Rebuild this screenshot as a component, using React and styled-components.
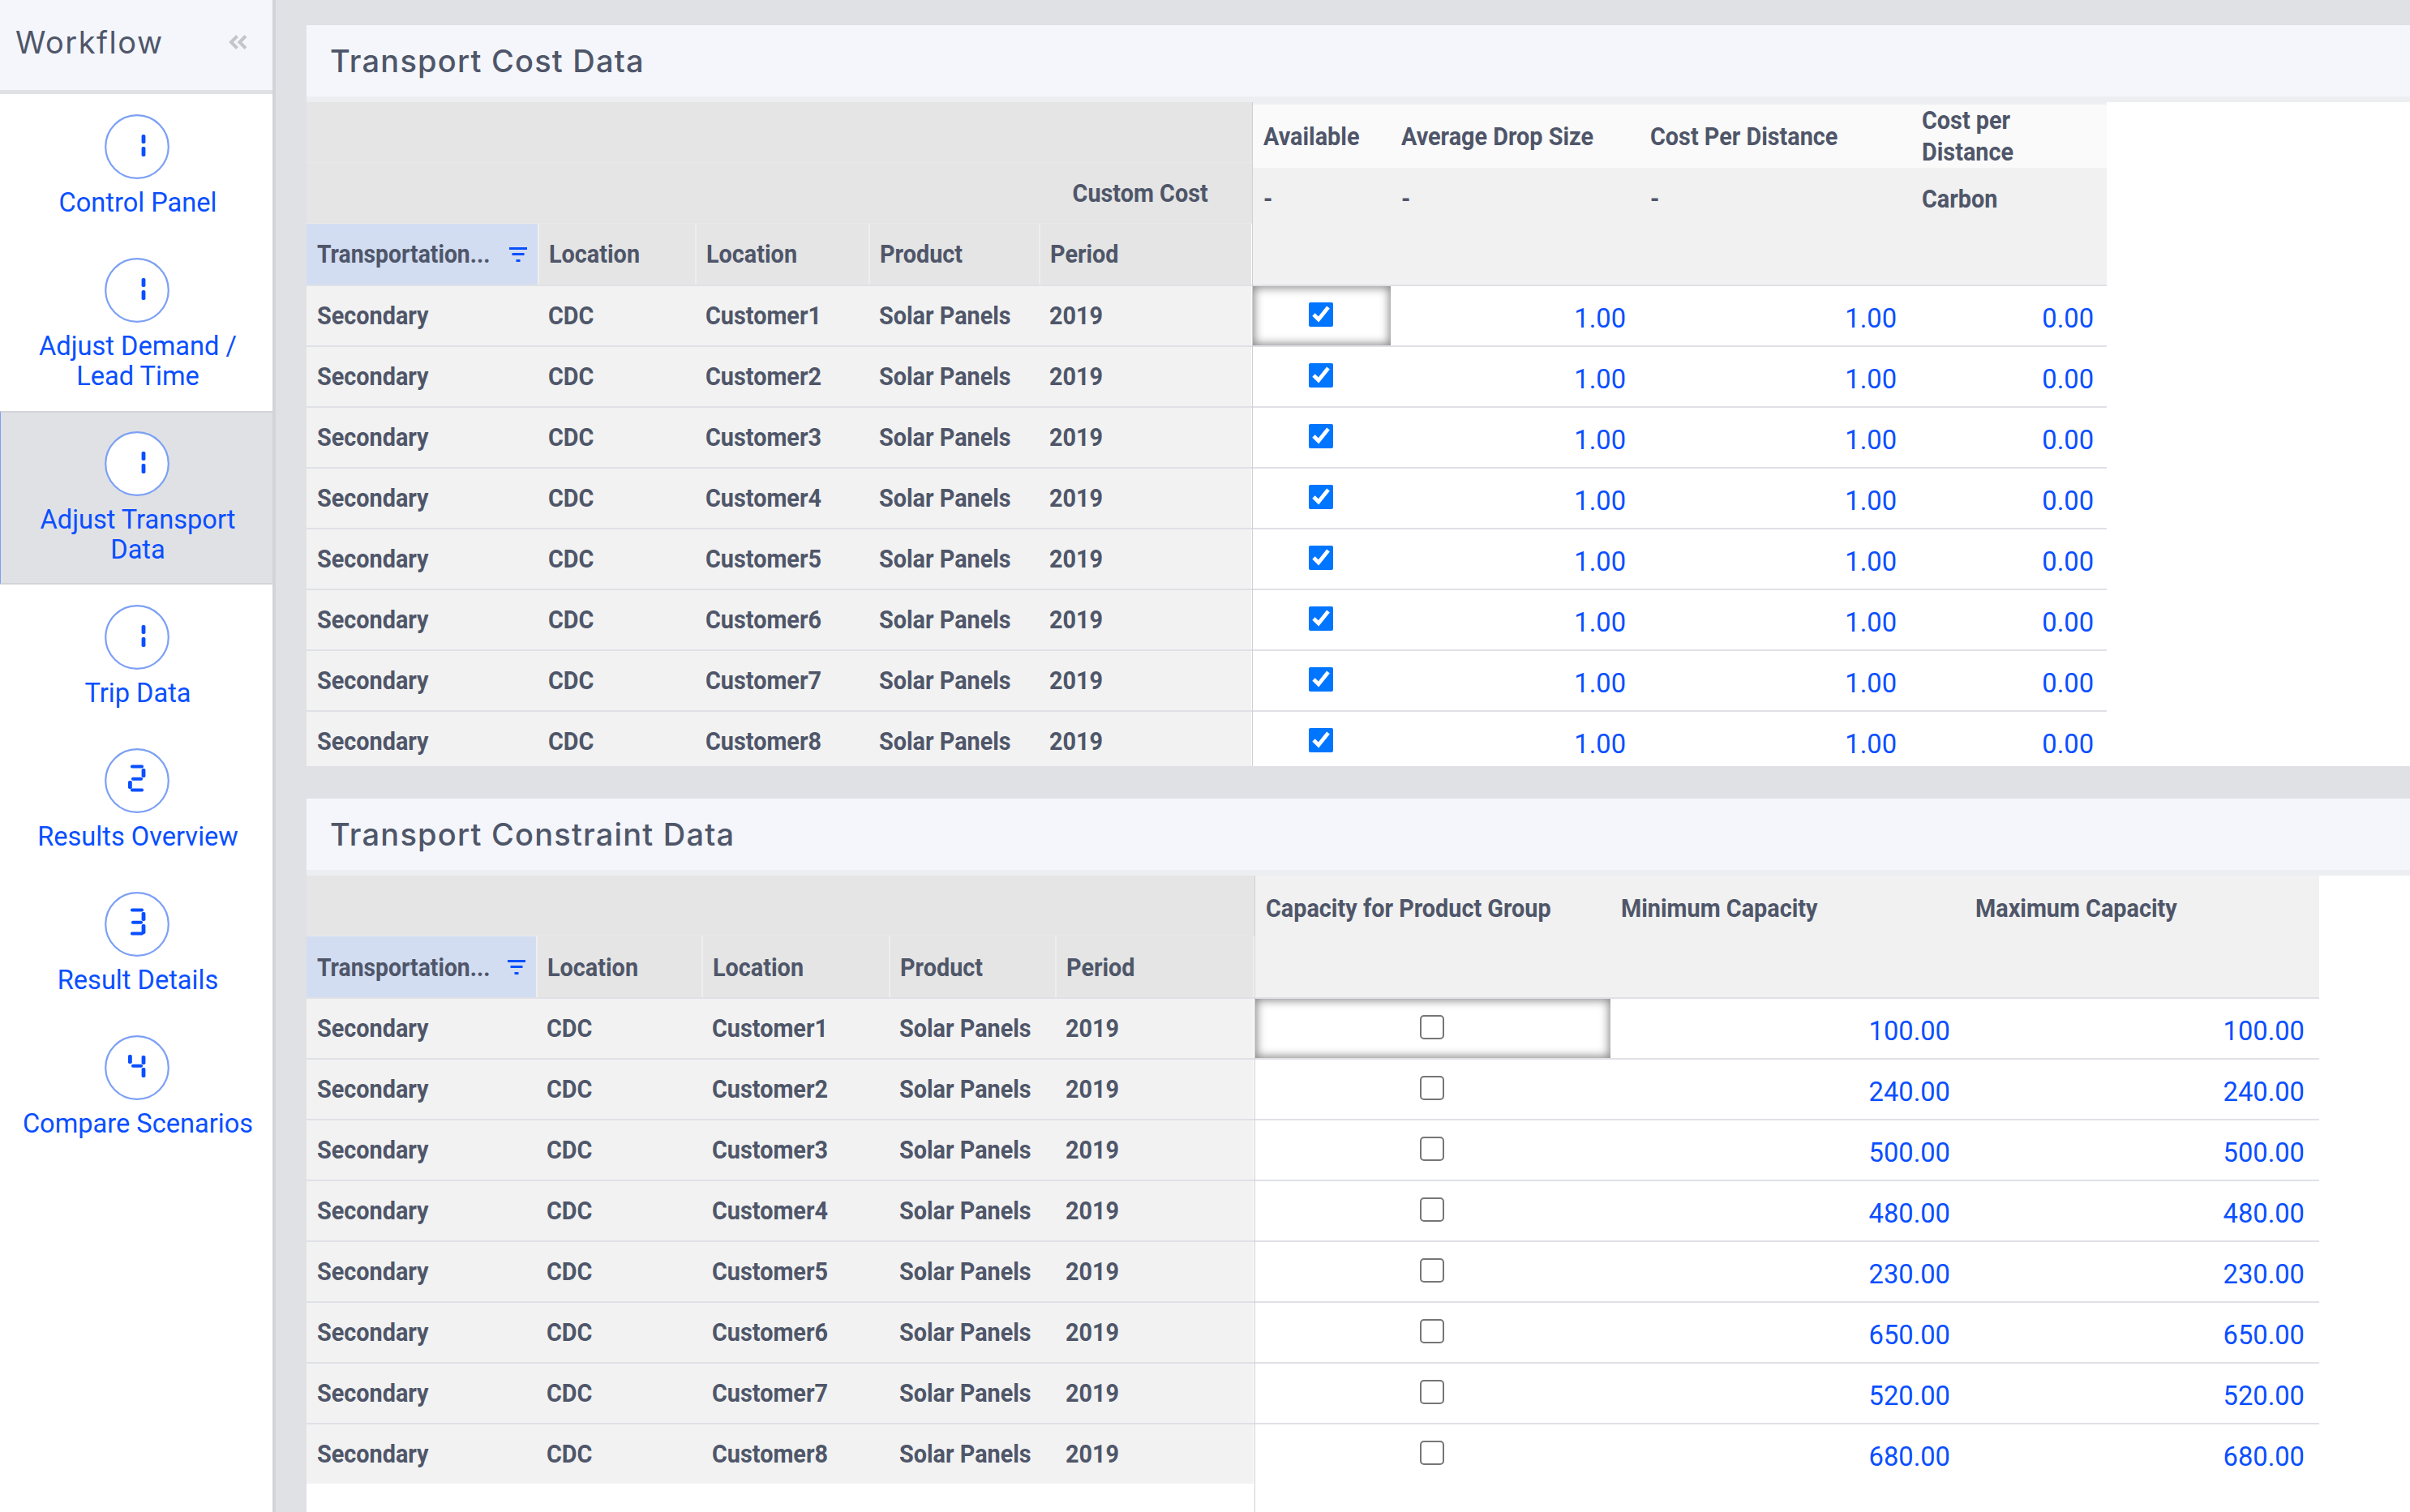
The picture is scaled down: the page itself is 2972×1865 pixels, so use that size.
import React from 'react';
import styled, { createGlobalStyle } from 'styled-components';

const GlobalStyle = createGlobalStyle`
  html, body {
    margin: 0;
    padding: 0;
    background: #fff;
  }
  * {
    box-sizing: border-box;
  }
`;

const Page = styled.div`
  display: flex;
  width: 2972px;
  height: 1865px;
  overflow: hidden;
  font-family: Roboto, "Liberation Sans", sans-serif;
`;

const Sidebar = styled.aside`
  flex: 0 0 340px;
  display: flex;
  flex-direction: column;
  background: #fff;
  border-right: 4px solid #d3d4d9;
`;

const SideHeader = styled.div`
  height: 116px;
  padding: 0 31px 7px 19px;
  display: flex;
  align-items: center;
  justify-content: space-between;
  background: #f4f6fb;
  border-bottom: 5px solid #e0e1e5;
`;

const SideTitle = styled.div`
  font-family: Inter, "Open Sans", sans-serif;
  font-size: 38px;
  font-weight: 400;
  letter-spacing: 1.5px;
  color: #4f5669;
`;

const NavItem = styled.div`
  height: ${(p) => p.$height}px;
  padding-top: ${(p) => (p.$active ? 23 : p.$late ? 26 : 25)}px;
  display: flex;
  flex-direction: column;
  align-items: center;
  background: ${(p) => (p.$active ? '#e0e1e5' : '#fff')};
  border-left: 1px solid ${(p) => (p.$active ? '#7ca0f5' : 'transparent')};
  border-top: ${(p) => (p.$active ? '2px solid #d3d4d9' : '0')};
  border-bottom: 2px solid ${(p) => (p.$active ? '#d3d4d9' : '#fff')};
`;

const NavLabel = styled.div`
  margin: 11px 0 0 3px;
  width: 296px;
  font-size: 32.6px;
  line-height: 37px;
  color: #0a4fff;
  text-align: center;
`;

const Main = styled.main`
  flex: 1;
  display: flex;
  flex-direction: column;
  gap: 40px;
  padding: 31px 0 0 38px;
  background: #e0e1e5;
`;

const Section = styled.section`
  height: ${(p) => (p.$height ? `${p.$height}px` : 'auto')};
  flex: ${(p) => (p.$height ? '0 0 auto' : 1)};
  display: flex;
  flex-direction: column;
  overflow: hidden;
  background: #fff;
`;

const SectionTitle = styled.h2`
  flex: 0 0 95px;
  margin: 0;
  padding: 0 0 1px 29px;
  display: flex;
  align-items: center;
  font-family: Inter, "Open Sans", sans-serif;
  font-size: 38px;
  font-weight: 500;
  letter-spacing: 1.2px;
  color: #4f5669;
  background: #f4f6fb;
  border-bottom: 7px solid #edeef2;
`;

const TableWrap = styled.div`
  flex: 1;
  display: flex;
  align-items: stretch;
`;

const FrozenPane = styled.div`
  flex: 0 0 ${(p) => p.$width}px;
  border-right: 1px solid #cfcfcf;
`;

const ScrollPane = styled.div`
  flex: 0 0 ${(p) => p.$width}px;
`;

const GridRow = styled.div`
  display: grid;
  grid-template-columns: ${(p) => p.$cols};
  height: ${(p) => p.$height || 75}px;
  background: ${(p) => p.$bg || 'transparent'};
  border-bottom: ${(p) => p.$line || '2px solid #e0e1e6'};
  border-top: ${(p) => p.$top || '0'};
`;

const HeadBand = styled.div`
  height: ${(p) => p.$height}px;
  padding-right: 54px;
  display: flex;
  align-items: center;
  justify-content: flex-end;
  background: #e5e5e5;
  border-bottom: ${(p) => p.$line || '1px solid #e9e9ea'};
`;

const HeadCell = styled.div`
  display: flex;
  align-items: center;
  justify-content: space-between;
  padding: 0 13px 0 ${(p) => (p.$first ? 13 : 12)}px;
  background: ${(p) => (p.$filtered ? '#d2ddf2' : '#e5e5e5')};
  border-left: ${(p) => (p.$first ? '0' : '2px solid #eeeeee')};
`;

const BoldText = styled.span`
  display: inline-block;
  min-width: 0;
  font-size: 32px;
  font-weight: 700;
  line-height: 39px;
  color: #4f5669;
  white-space: nowrap;
  transform: scaleX(${(p) => p.$squeeze || 0.9});
  transform-origin: ${(p) => (p.$right ? 'right' : 'left')} center;
  margin-top: ${(p) => p.$drop || 0}px;
`;

const ColHead = styled.div`
  padding-left: ${(p) => p.$pad || 13}px;
  display: flex;
  align-items: ${(p) => (p.$top ? 'flex-start' : 'center')};
  padding-top: ${(p) => (p.$top ? `${p.$top}px` : 0)};
`;

const FrozenCell = styled.div`
  padding-left: 13px;
  display: flex;
  align-items: center;
  background: #f2f2f2;
`;

const CheckCell = styled.div`
  display: flex;
  align-items: center;
  justify-content: center;
  padding: 0 2px 3px 0;
  background: #fff;
  box-shadow: ${(p) => (p.$selected ? 'inset 0 0 12px 2px #888' : 'none')};
`;

const Check = styled.input`
  width: 30px;
  height: 30px;
  margin: 0;
  accent-color: #0075ff;

  &:not(:checked) {
    appearance: none;
    background: #fff;
    border: 2px solid #767676;
    border-radius: 5px;
  }
`;

const NumCell = styled.div`
  padding: 7px ${(p) => p.$pad}px 0 0;
  display: flex;
  align-items: center;
  justify-content: flex-end;
  font-size: 32.7px;
  color: #0a4fff;
  background: #fff;
`;

const digitSegments = {
  1: ['b', 'c'],
  2: ['a', 'b', 'g', 'e', 'd'],
  3: ['a', 'b', 'g', 'c', 'd'],
  4: ['f', 'g', 'b', 'c'],
};

const segmentRects = {
  a: { x: 32, y: 20.5, width: 16, height: 4 },
  b: { x: 45.6, y: 25, width: 4.8, height: 11 },
  c: { x: 45.6, y: 40, width: 4.8, height: 12 },
  d: { x: 32, y: 49.5, width: 16, height: 4 },
  e: { x: 29, y: 40, width: 4.8, height: 10 },
  f: { x: 29, y: 24, width: 4.8, height: 11 },
  g: { x: 33, y: 35.8, width: 14, height: 4 },
};

function StepBadge({ digit }) {
  return (
    <svg width="80" height="80" viewBox="0 0 80 80" style={{ flex: 'none' }}>
      <circle cx="40" cy="40" r="38.8" fill="#fff" stroke="#7ca0f5" strokeWidth="2.2" />
      {digitSegments[digit].map((s) => (
        <rect key={s} {...segmentRects[s]} rx="1.8" fill="#0a4fff" />
      ))}
    </svg>
  );
}

function FilterIcon() {
  return (
    <svg width="22" height="18" viewBox="0 0 22 18" style={{ flex: 'none' }}>
      <rect x="0" y="0" width="22" height="3" fill="#0a4fff" />
      <rect x="3.5" y="7" width="15" height="3" fill="#0a4fff" />
      <rect x="8.5" y="15" width="5" height="3" fill="#0a4fff" />
    </svg>
  );
}

function CollapseIcon() {
  return (
    <svg width="23" height="18" viewBox="0 0 23 18" fill="none" stroke="#c3c5cb" strokeWidth="4">
      <path d="M10.5 1.5 3 9l7.5 7.5" />
      <path d="M21 1.5 13.5 9l7.5 7.5" />
    </svg>
  );
}

const navItems = [
  { label: 'Control Panel', digit: 1, height: 177 },
  { label: 'Adjust Demand / Lead Time', digit: 1, height: 214 },
  { label: 'Adjust Transport Data', digit: 1, height: 214, active: true },
  { label: 'Trip Data', digit: 1, height: 176 },
  { label: 'Results Overview', digit: 2, height: 177, late: true },
  { label: 'Result Details', digit: 3, height: 177, late: true },
  { label: 'Compare Scenarios', digit: 4, height: 177, late: true },
];

const customers = [1, 2, 3, 4, 5, 6, 7, 8];

const costFrozen = '285px 194px 214px 210px 262px';
const costCols = '170px 306px 334px 243px';
const costNums = ['1.00', '1.00', '0.00'];

const constraintFrozen = '283px 204px 231px 205px 245px';
const constraintCols = '438px 437px 437px';
const constraintNums = ['100.00', '240.00', '500.00', '480.00', '230.00', '650.00', '520.00', '680.00'];

function FrozenHead({ cols, labels, drop }) {
  return (
    <GridRow $cols={cols} $height={77}>
      <HeadCell $filtered $first>
        <BoldText $squeeze={0.885} $drop={drop}>Transportation...</BoldText>
        <FilterIcon />
      </HeadCell>
      {labels.map((l, i) => (
        <HeadCell key={i}>
          <BoldText $drop={drop}>{l}</BoldText>
        </HeadCell>
      ))}
    </GridRow>
  );
}

function FrozenRow({ cols, n, last }) {
  return (
    <GridRow $cols={cols} $height={last ? 73 : 75} $line={last ? '0' : undefined}>
      <FrozenCell><BoldText>Secondary</BoldText></FrozenCell>
      <FrozenCell><BoldText>CDC</BoldText></FrozenCell>
      <FrozenCell><BoldText>Customer{n}</BoldText></FrozenCell>
      <FrozenCell><BoldText>Solar Panels</BoldText></FrozenCell>
      <FrozenCell><BoldText>2019</BoldText></FrozenCell>
    </GridRow>
  );
}

const headLabels = ['Location', 'Location', 'Product', 'Period'];

export default function App() {
  return (
    <Page>
      <GlobalStyle />
      <Sidebar>
        <SideHeader>
          <SideTitle>Workflow</SideTitle>
          <CollapseIcon />
        </SideHeader>
        {navItems.map((item) => (
          <NavItem key={item.label} $height={item.height} $active={item.active} $late={item.late}>
            <StepBadge digit={item.digit} />
            <NavLabel>{item.label}</NavLabel>
          </NavItem>
        ))}
      </Sidebar>

      <Main>
        <Section $height={914}>
          <SectionTitle>Transport Cost Data</SectionTitle>
          <TableWrap>
            <FrozenPane $width={1167}>
              <HeadBand $height={75} />
              <HeadBand $height={75}>
                <BoldText $right>Custom Cost</BoldText>
              </HeadBand>
              <FrozenHead cols={costFrozen} labels={headLabels} />
              {customers.map((n) => (
                <FrozenRow key={n} cols={costFrozen} n={n} />
              ))}
            </FrozenPane>
            <ScrollPane $width={1053}>
              <GridRow $cols={costCols} $height={81} $bg="#fafafa" $line="0" $top="3px solid #eeeff2">
                <ColHead><BoldText>Available</BoldText></ColHead>
                <ColHead><BoldText>Average Drop Size</BoldText></ColHead>
                <ColHead $pad={14}><BoldText>Cost Per Distance</BoldText></ColHead>
                <ColHead $pad={15}><BoldText>Cost per<br />Distance</BoldText></ColHead>
              </GridRow>
              <GridRow $cols={costCols} $height={146} $bg="#f1f1f1">
                <ColHead $top={19}><BoldText>-</BoldText></ColHead>
                <ColHead $top={19}><BoldText>-</BoldText></ColHead>
                <ColHead $top={19} $pad={14}><BoldText>-</BoldText></ColHead>
                <ColHead $top={19} $pad={15}><BoldText>Carbon</BoldText></ColHead>
              </GridRow>
              {customers.map((n, i) => (
                <GridRow key={n} $cols={costCols}>
                  <CheckCell $selected={i === 0}>
                    <Check type="checkbox" defaultChecked />
                  </CheckCell>
                  {costNums.map((v, j) => (
                    <NumCell key={j} $pad={16}>{v}</NumCell>
                  ))}
                </GridRow>
              ))}
            </ScrollPane>
          </TableWrap>
        </Section>

        <Section>
          <SectionTitle>Transport Constraint Data</SectionTitle>
          <TableWrap>
            <FrozenPane $width={1170}>
              <HeadBand $height={75} />
              <FrozenHead cols={constraintFrozen} labels={headLabels} drop={2} />
              {customers.map((n) => (
                <FrozenRow key={n} cols={constraintFrozen} n={n} last={n === 8} />
              ))}
            </FrozenPane>
            <ScrollPane $width={1312}>
              <GridRow $cols={constraintCols} $height={152} $bg="#f1f1f1">
                <ColHead $top={21}><BoldText>Capacity for Product Group</BoldText></ColHead>
                <ColHead $top={21}><BoldText>Minimum Capacity</BoldText></ColHead>
                <ColHead $top={21}><BoldText>Maximum Capacity</BoldText></ColHead>
              </GridRow>
              {constraintNums.map((v, i) => (
                <GridRow key={v} $cols={constraintCols} $height={i === 7 ? 73 : 75} $line={i === 7 ? '0' : undefined}>
                  <CheckCell $selected={i === 0}>
                    <Check type="checkbox" />
                  </CheckCell>
                  <NumCell $pad={18}>{v}</NumCell>
                  <NumCell $pad={18}>{v}</NumCell>
                </GridRow>
              ))}
            </ScrollPane>
          </TableWrap>
        </Section>
      </Main>
    </Page>
  );
}
